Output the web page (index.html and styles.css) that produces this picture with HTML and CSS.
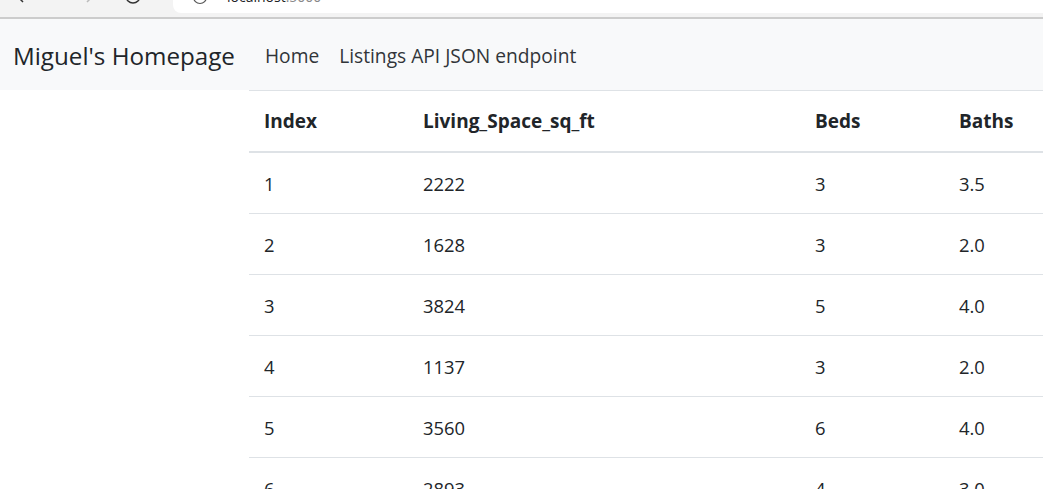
FILE: index.html
```html
<!DOCTYPE html>
<html lang="en">
<head>
<meta charset="utf-8">
<title>Miguel's Homepage</title>
<link rel="stylesheet" href="styles.css">
</head>
<body>
<div class="chrome">
  <div class="chrome-top">
    <div class="chrome-btns">
      <svg class="ico back" width="16" height="13" viewBox="0 0 16 13"><path d="M10 -6 L4 0 L6 2" fill="none" stroke="#333" stroke-width="1.5"/></svg>
      <svg class="ico fwd" width="16" height="13" viewBox="0 0 16 13"><path d="M6 -6 L12 0 L10 2" fill="none" stroke="#bbb" stroke-width="1.5"/></svg>
      <svg class="ico reload" width="20" height="13" viewBox="0 0 20 13"><path d="M3 -4 A7 7 0 0 0 17 -4" fill="none" stroke="#333" stroke-width="1.5"/></svg>
    </div>
    <div class="address">
      <svg class="info" width="18" height="13" viewBox="0 0 18 13"><circle cx="9" cy="-3" r="6.5" fill="none" stroke="#555" stroke-width="1.2"/></svg>
      <div class="url"><span class="host">localhost</span><span class="port">:5000</span></div>
    </div>
  </div>
</div>
<nav class="navbar">
  <a class="brand" href="#">Miguel's Homepage</a>
  <ul class="nav-links">
    <li><a href="#">Home</a></li>
    <li><a href="#">Listings API JSON endpoint</a></li>
  </ul>
</nav>
<main class="content">
  <table class="listings">
    <colgroup>
      <col class="c1"><col class="c2"><col class="c3"><col class="c4">
    </colgroup>
    <thead>
      <tr><th>Index</th><th>Living_Space_sq_ft</th><th>Beds</th><th>Baths</th></tr>
    </thead>
    <tbody>
      <tr><td>1</td><td>2222</td><td>3</td><td>3.5</td></tr>
      <tr><td>2</td><td>1628</td><td>3</td><td>2.0</td></tr>
      <tr><td>3</td><td>3824</td><td>5</td><td>4.0</td></tr>
      <tr><td>4</td><td>1137</td><td>3</td><td>2.0</td></tr>
      <tr><td>5</td><td>3560</td><td>6</td><td>4.0</td></tr>
      <tr><td>6</td><td>2893</td><td>4</td><td>3.0</td></tr>
    </tbody>
  </table>
</main>
</body>
</html>
```
FILE: styles.css
```css
html, body {
  margin: 0;
  padding: 0;
  background: #fff;
  color: #212529;
  font-family: "Open Sans", "Noto Sans", "Liberation Sans", sans-serif;
  overflow: hidden;
}

.chrome {
  height: 17px;
  background: #f3f3f3;
  border-bottom: 2px solid #cccccc;
}

.chrome-top {
  display: flex;
  height: 13px;
}

.chrome-btns {
  display: flex;
  width: 173px;
  align-items: flex-start;
}

.ico {
  display: block;
}

.back { margin-left: 17px; }
.fwd { margin-left: 44px; }
.reload { margin-left: 30px; }

.address {
  flex: 1;
  display: flex;
  height: 13px;
  background: #fff;
  border-bottom-left-radius: 8px;
  overflow: hidden;
}

.info {
  display: block;
  margin-left: 18px;
}

.url {
  margin-left: 18px;
  margin-top: -13px;
  font-family: "Open Sans", "Noto Sans", sans-serif;
  font-size: 14px;
  line-height: 20px;
}

.host { color: #202124; }
.port { color: #888; }

.navbar {
  box-sizing: border-box;
  display: flex;
  align-items: center;
  height: 71px;
  padding-top: 2px;
  background: #f8f9fa;
}

.brand {
  padding-left: 13px;
  font-size: 24.2px;
  color: #212529;
  text-decoration: none;
  line-height: 32px;
}

.nav-links {
  display: flex;
  list-style: none;
  margin: 0 0 0 30px;
  padding: 0;
  gap: 20px;
}

.nav-links a {
  font-size: 19.2px;
  color: #212529;
  opacity: 0.92;
  text-decoration: none;
}

.content {
  padding-left: 249px;
}

.listings {
  width: 794px;
  border-collapse: collapse;
  table-layout: fixed;
  border-top: 1px solid #dee2e6;
  font-size: 18.4px;
}

.c1 { width: 159px; }
.c2 { width: 392px; }
.c3 { width: 144px; }
.c4 { width: 99px; }

.listings th,
.listings td {
  text-align: left;
  padding: 0 0 0 15px;
  white-space: nowrap;
}

.listings th {
  height: 60px;
  font-size: 19px;
  font-weight: 700;
  border-bottom: 2px solid #dee2e6;
}

.listings td {
  height: 60px;
  border-bottom: 1px solid #dee2e6;
}
```
